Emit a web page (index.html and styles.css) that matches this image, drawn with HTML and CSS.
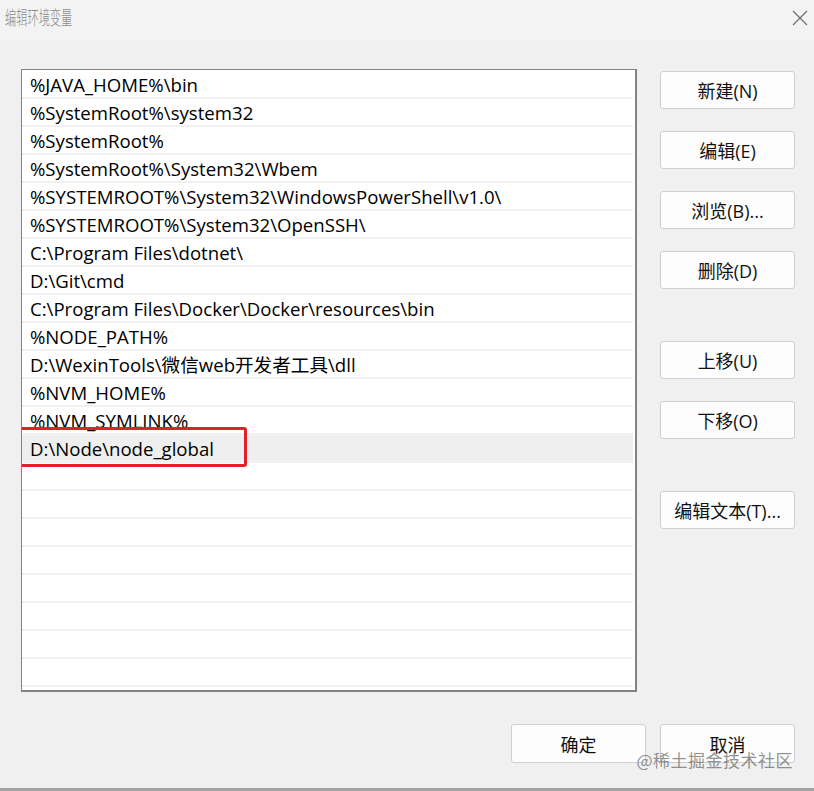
FILE: index.html
```html
<!DOCTYPE html>
<html lang="zh">
<head>
<meta charset="utf-8">
<title>编辑环境变量</title>
<link rel="stylesheet" href="styles.css">
</head>
<body>
<div class="dialog">
  <div class="titlebar">
    <span class="title">编辑环境变量</span>
    <svg class="close" width="16" height="16" viewBox="0 0 16 16"><path d="M1 1 L15 15 M15 1 L1 15" stroke="#6a6a6a" stroke-width="1.1" fill="none"/></svg>
  </div>
  <div class="main">
    <div class="list">
      <div class="row">%JAVA_HOME%\bin</div>
      <div class="row">%SystemRoot%\system32</div>
      <div class="row">%SystemRoot%</div>
      <div class="row">%SystemRoot%\System32\Wbem</div>
      <div class="row">%SYSTEMROOT%\System32\WindowsPowerShell\v1.0\</div>
      <div class="row">%SYSTEMROOT%\System32\OpenSSH\</div>
      <div class="row">C:\Program Files\dotnet\</div>
      <div class="row">D:\Git\cmd</div>
      <div class="row">C:\Program Files\Docker\Docker\resources\bin</div>
      <div class="row">%NODE_PATH%</div>
      <div class="row">D:\WexinTools\微信web开发者工具\dll</div>
      <div class="row">%NVM_HOME%</div>
      <div class="row">%NVM_SYMLINK%</div>
      <div class="row selected">D:\Node\node_global<span class="highlight"></span></div>
      <div class="row"></div>
      <div class="row"></div>
      <div class="row"></div>
      <div class="row"></div>
      <div class="row"></div>
      <div class="row"></div>
      <div class="row"></div>
      <div class="row"></div>
      <div class="row"></div>
    </div>
    <div class="side">
      <button class="btn">新建(N)</button>
      <button class="btn gap-s">编辑(E)</button>
      <button class="btn gap-s">浏览(B)...</button>
      <button class="btn gap-s">删除(D)</button>
      <button class="btn gap-l">上移(U)</button>
      <button class="btn gap-s">下移(O)</button>
      <button class="btn gap-l">编辑文本(T)...</button>
    </div>
  </div>
  <div class="footer">
    <button class="btn">确定</button>
    <button class="btn">取消</button>
    <span class="watermark">@稀土掘金技术社区</span>
  </div>
  <div class="bottomline"></div>
</div>
</body>
</html>
```
FILE: styles.css
```css
* { box-sizing: border-box; }
html, body { margin: 0; padding: 0; }
body {
  background: #f0f0f0;
  font-family: "Open Sans", "Noto Sans CJK SC", sans-serif;
  color: #000;
  width: 814px;
  height: 791px;
  overflow: hidden;
}
.dialog {
  position: relative;
  width: 814px;
  height: 791px;
  display: flex;
  flex-direction: column;
}
.titlebar {
  height: 40px;
  background: #f3f3f3;
  display: flex;
  align-items: flex-start;
  justify-content: space-between;
  padding: 4px 6px 0 5px;
}
.title {
  font-family: "Noto Sans CJK SC", sans-serif;
  font-size: 19px;
  color: #8a8a8a;
  font-weight: 300;
  line-height: 26px;
  transform: scaleX(0.59);
  transform-origin: left center;
  display: inline-block;
}
.close { margin-top: 6px; }
.main {
  display: flex;
  padding: 29px 0 0 21px;
}
.list {
  width: 616px;
  height: 623px;
  border: 1px solid #828282;
  border-width: 1px 2px 2px 1px;
  background: #fff;
  padding: 1px 2px 0 0;
  overflow: hidden;
}
.row {
  position: relative;
  height: 28px;
  line-height: 27px;
  border-bottom: 2px solid #f1f1f1;
  padding-left: 8px;
  font-size: 18.6px;
  font-family: "Open Sans", "Noto Sans CJK SC", sans-serif;
  white-space: nowrap;
}
.row.selected { background: #efefef; }
.highlight {
  position: absolute;
  left: -4px;
  top: -8px;
  width: 229px;
  height: 40px;
  border: 3.5px solid #e3202a;
  border-radius: 3px;
}
.side {
  display: flex;
  flex-direction: column;
  margin-left: 23px;
  padding-top: 2px;
}
.btn {
  width: 135px;
  height: 38px;
  background: #fdfdfd;
  border: 1px solid #cfcfcf;
  border-radius: 3px;
  font-family: "Open Sans", "Noto Sans CJK SC", sans-serif;
  font-size: 18px;
  color: #111;
  padding: 0;
}
.gap-s { margin-top: 22px; }
.gap-l { margin-top: 52px; }
.footer {
  position: relative;
  display: flex;
  justify-content: flex-end;
  gap: 14px;
  padding: 32px 19px 0 0;
}
.footer .btn { height: 39px; font-size: 18px; }
.watermark {
  position: absolute;
  right: 21px;
  top: 55px;
  font-size: 17px;
  color: rgba(110, 110, 110, 0.75);
  font-family: "Noto Sans CJK SC", sans-serif;
  letter-spacing: 0.5px;
}
.bottomline {
  position: absolute;
  left: 0;
  right: 0;
  bottom: 0;
  height: 3px;
  background: #a3a3a3;
}
```
